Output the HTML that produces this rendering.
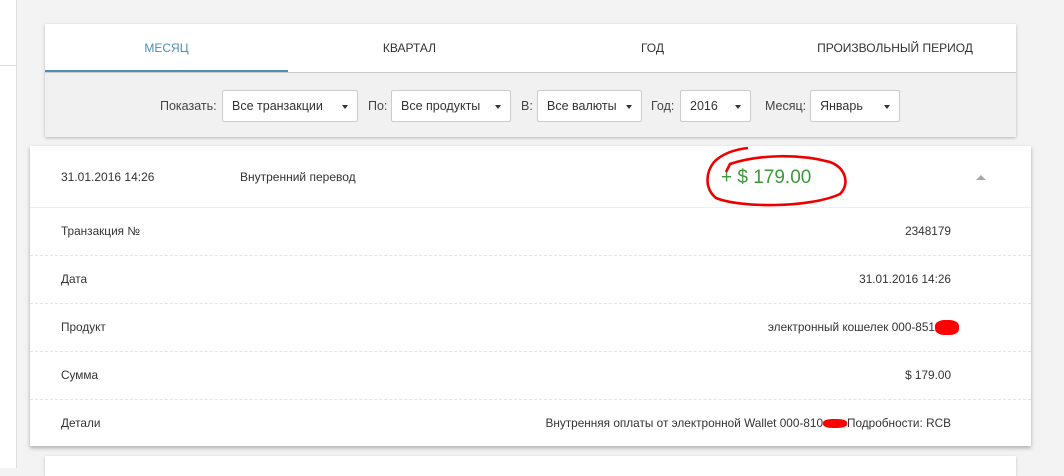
<!DOCTYPE html>
<html><head><meta charset="utf-8"><style>
body{margin:0;width:1064px;height:468px;background:#f3f3f3;font-family:"Liberation Sans",sans-serif;font-size:12px;color:#333;position:relative;overflow:hidden}
.a{position:absolute}
.sel{position:absolute;top:90px;background:#fff;border:1px solid #ccc;border-radius:2px;box-sizing:border-box;height:32px;line-height:30px;padding-left:9px;font-size:12.5px;color:#333}
.sel:after{content:"";position:absolute;right:9px;top:14px;border-left:3.5px solid transparent;border-right:3.5px solid transparent;border-top:4px solid #333}
.lbl{position:absolute;top:90px;line-height:32px;font-size:12.5px;color:#444}
.tab{position:absolute;top:24px;height:48px;line-height:48px;text-align:center;font-size:12px;color:#333}
.row{position:absolute;left:30px;width:1001px;height:48px;border-top:1px dashed #e4e4e4;box-sizing:border-box;line-height:47px;font-size:11.8px}
.row .l{position:absolute;left:31px}.row .r{position:absolute;right:80px}
.red{display:inline-block;background:#f00;border-radius:40%;vertical-align:middle}
</style></head><body>
<div class="a" style="left:0;top:0;width:16px;height:468px;background:#fff;border-right:1px solid #ddd"></div>
<div class="a" style="left:0;top:65px;width:16px;height:1px;background:#ddd"></div>
<div class="a" style="left:45px;top:24px;width:971px;height:113px;background:#f1f1f1;box-shadow:0 1px 3px rgba(0,0,0,.25)"></div>
<div class="a" style="left:45px;top:24px;width:971px;height:48px;background:#fff;border-bottom:1px solid #ccc"></div>
<div class="a" style="left:45px;top:70px;width:243px;height:2px;background:#4a90b8"></div>
<div class="tab" style="left:45px;width:243px;color:#4a8fb5">МЕСЯЦ</div>
<div class="tab" style="left:288px;width:243px">КВАРТАЛ</div>
<div class="tab" style="left:531px;width:243px">ГОД</div>
<div class="tab" style="left:774px;width:242px">ПРОИЗВОЛЬНЫЙ ПЕРИОД</div>
<div class="lbl" style="left:160px">Показать:</div><div class="sel" style="left:222px;width:136px">Все транзакции</div>
<div class="lbl" style="left:368px">По:</div><div class="sel" style="left:391px;width:120px">Все продукты</div>
<div class="lbl" style="left:521px">В:</div><div class="sel" style="left:537px;width:105px">Все валюты</div>
<div class="lbl" style="left:651px">Год:</div><div class="sel" style="left:680px;width:71px">2016</div>
<div class="lbl" style="left:765px">Месяц:</div><div class="sel" style="left:810px;width:90px">Январь</div>
<div class="a" style="left:45px;top:456px;width:971px;height:20px;background:#fff;box-shadow:0 1px 3px rgba(0,0,0,.2)"></div>
<div class="a" style="left:30px;top:146px;width:1001px;height:300px;background:#fff;box-shadow:0 2px 4px rgba(0,0,0,.3)"></div>
<div class="a" style="left:61px;top:170px;font-size:12px">31.01.2016 14:26</div>
<div class="a" style="left:240px;top:170px;font-size:12px">Внутренний перевод</div>
<div class="a" style="left:721px;top:167px;font-size:19px;color:#3a9a3a">+ $ 179.00</div>
<svg class="a" style="left:700px;top:144px" width="150" height="66"><path d="M48 4 C30 6 20 12 14 18 C6 28 4 44 16 54 C40 64 110 64 140 50 C150 40 146 24 130 18 C100 10 60 10 30 20 L26 28" fill="none" stroke="#e00" stroke-width="2.6"/></svg>
<div class="a" style="left:976px;top:175px;border-left:5px solid transparent;border-right:5px solid transparent;border-bottom:5px solid #aaa"></div>
<div class="row" style="top:207px;border-top:1px solid #eee"><span class="l">Транзакция №</span><span class="r">2348179</span></div>
<div class="row" style="top:255px"><span class="l">Дата</span><span class="r">31.01.2016 14:26</span></div>
<div class="row" style="top:303px"><span class="l">Продукт</span><span class="r" style="right:72px">электронный кошелек 000-851<span class="red" style="width:24px;height:15px"></span></span></div>
<div class="row" style="top:351px"><span class="l">Сумма</span><span class="r">$ 179.00</span></div>
<div class="row" style="top:399px"><span class="l">Детали</span><span class="r">Внутренняя оплаты от электронной Wallet 000-810<span class="red" style="width:24px;height:9px"></span>Подробности: RCB</span></div>
</body></html>
